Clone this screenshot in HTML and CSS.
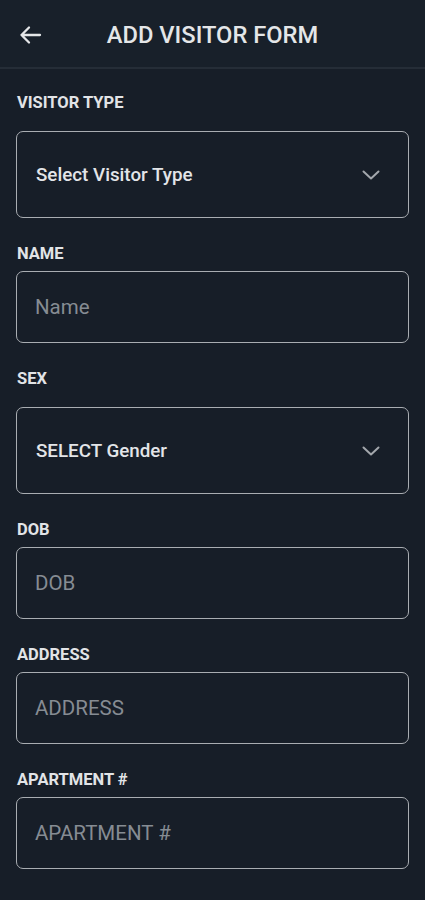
FILE: index.html
```html
<!DOCTYPE html>
<html lang="en">
<head>
<meta charset="utf-8">
<title>Add Visitor Form</title>
<link rel="stylesheet" href="styles.css">
</head>
<body>
<div class="screen">
  <header class="topbar">
    <div class="back">
      <svg class="back-icon" width="24" height="20" viewBox="0 0 24 20">
        <path d="M22 10H3.5M11 2.5L3.5 10L11 17.5" fill="none" stroke="#e4e6e8" stroke-width="2.3" stroke-linecap="round" stroke-linejoin="round"/>
      </svg>
    </div>
    <h1 class="title">ADD VISITOR FORM</h1>
    <div></div>
  </header>

  <main class="form">
    <div class="field field-first">
      <div class="label label-select">VISITOR TYPE</div>
      <div class="box box-select">
        <span class="value">Select Visitor Type</span>
        <svg class="chev" width="18" height="10" viewBox="0 0 18 10"><path d="M1.5 1.5L9 8.5L16.5 1.5" fill="none" stroke="#a3a7ac" stroke-width="2" stroke-linecap="round" stroke-linejoin="round"/></svg>
      </div>
    </div>

    <div class="field">
      <div class="label">NAME</div>
      <div class="box box-input"><span class="placeholder">Name</span></div>
    </div>

    <div class="field">
      <div class="label label-select">SEX</div>
      <div class="box box-select">
        <span class="value">SELECT Gender</span>
        <svg class="chev" width="18" height="10" viewBox="0 0 18 10"><path d="M1.5 1.5L9 8.5L16.5 1.5" fill="none" stroke="#a3a7ac" stroke-width="2" stroke-linecap="round" stroke-linejoin="round"/></svg>
      </div>
    </div>

    <div class="field">
      <div class="label">DOB</div>
      <div class="box box-input"><span class="placeholder">DOB</span></div>
    </div>

    <div class="field">
      <div class="label">ADDRESS</div>
      <div class="box box-input"><span class="placeholder">ADDRESS</span></div>
    </div>

    <div class="field">
      <div class="label">APARTMENT #</div>
      <div class="box box-input"><span class="placeholder">APARTMENT #</span></div>
    </div>
  </main>
</div>
</body>
</html>
```

FILE: styles.css
```css
* { box-sizing: border-box; }

html, body {
  margin: 0;
  padding: 0;
  background: #171e28;
}

body {
  font-family: Roboto, "Liberation Sans", sans-serif;
  color: #e6e7e9;
}

.screen {
  width: 425px;
  min-height: 900px;
  background: #171e28;
}

.topbar {
  height: 69px;
  display: grid;
  grid-template-columns: 1fr auto 1fr;
  align-items: center;
  border-bottom: 2px solid #252d37;
  background: #18202a;
}

.back {
  padding-left: 18px;
  display: flex;
  align-items: center;
  padding-top: 2px;
}

.title {
  margin: 0;
  font-size: 23.7px;
  font-weight: 500;
  color: #e4e6e8;
  letter-spacing: 0;
  padding-top: 2px;
}

.form {
  padding: 0 16px;
}

.field {
  margin-top: 26px;
}

.field-first {
  margin-top: 24px;
}

.label {
  font-size: 16.5px;
  font-weight: 700;
  line-height: 20px;
  color: #e2e4e7;
  margin-bottom: 7px;
  padding-left: 1px;
}

.label-select {
  margin-bottom: 18px;
}

.box {
  border: 1.5px solid #a9adb2;
  border-radius: 7px;
  display: flex;
  align-items: center;
  padding: 0 18px;
}

.box-select {
  height: 87px;
  justify-content: space-between;
  padding-right: 28px;
  padding-left: 19px;
}

.box-input {
  height: 72px;
}

.value {
  font-size: 18.8px;
  font-weight: 500;
  color: #e3e5e8;
}

.placeholder {
  font-size: 20.5px;
  font-weight: 400;
  color: #868c93;
}

.chev {
  display: block;
}
```
